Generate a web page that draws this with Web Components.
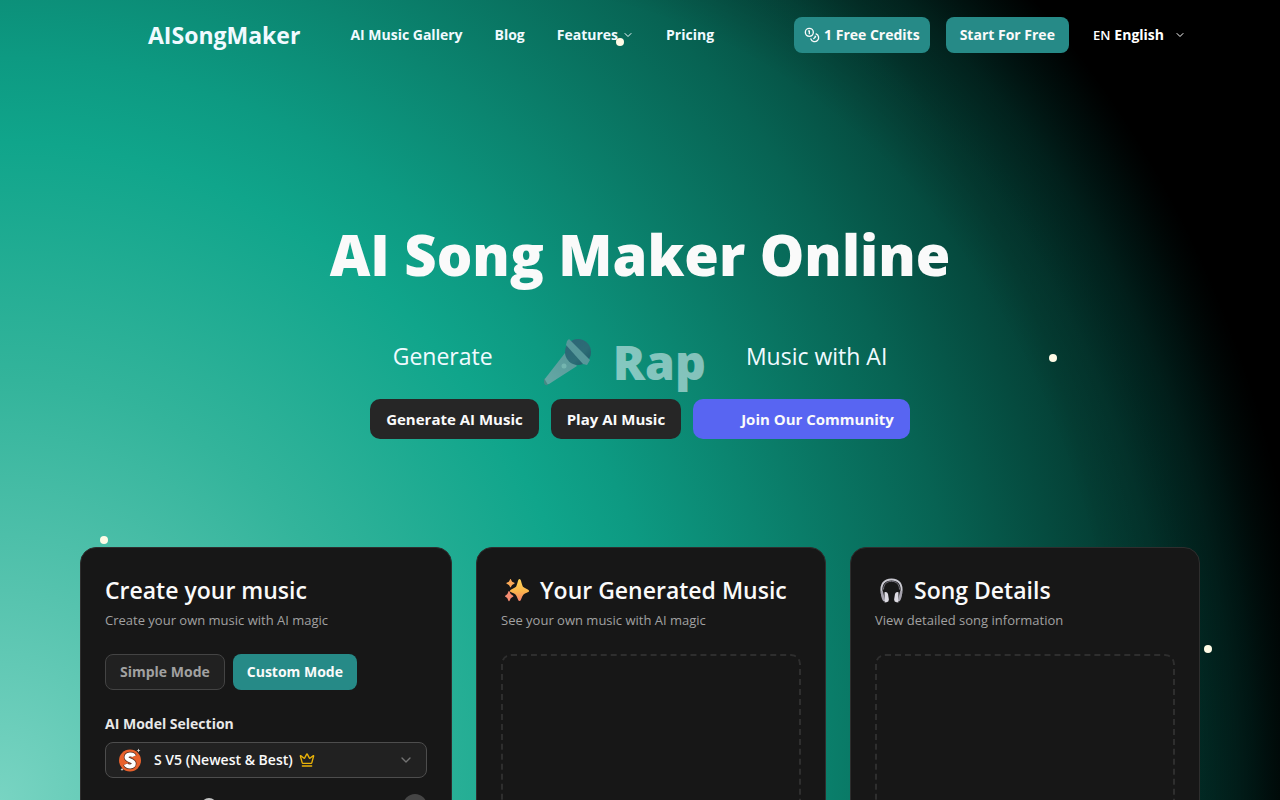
<!DOCTYPE html>
<html lang="en">
<head>
<meta charset="utf-8">
<meta name="viewport" content="width=device-width, initial-scale=1">
<title>AI Song Maker Online</title>
<style>
   html, body {
      margin: 0;
      block-size: 100%;
      overflow: hidden;
      background: #000;
   }
   body {
      font-family: "Open Sans", "Noto Sans", sans-serif;
      font-size: 14px;
      line-height: 20px;
      color: #fafafa;
   }
</style>
</head>
<body>
<song-page>
   <site-header slot="header">
      <a slot="brand" href="#">AISongMaker</a>
      <nav-link href="#gallery">AI Music Gallery</nav-link>
      <nav-link href="#blog">Blog</nav-link>
      <nav-link href="#features" has-menu>Features</nav-link>
      <nav-link href="#pricing">Pricing</nav-link>
      <app-button slot="actions" variant="teal" icon><svg-icon name="coins" size="16"></svg-icon>1 Free Credits</app-button>
      <app-button slot="actions" variant="teal">Start For Free</app-button>
      <language-menu slot="actions" code="EN">English</language-menu>
   </site-header>

   <hero-banner>
      <span slot="title">AI Song Maker Online</span>
      <span slot="before">Generate</span>
      <svg-icon slot="genre" name="mic" size="48"></svg-icon>
      <span slot="genre">Rap</span>
      <span slot="after">Music with AI</span>
      <app-button slot="actions" variant="dark" large>Generate AI Music</app-button>
      <app-button slot="actions" variant="dark" large>Play AI Music</app-button>
      <app-button slot="actions" variant="discord" large>Join Our Community</app-button>
   </hero-banner>

   <card-row>
      <music-card>
         <span slot="title">Create your music</span>
         <span slot="subtitle">Create your own music with AI magic</span>
         <create-form></create-form>
      </music-card>
      <music-card>
         <svg-icon slot="title" name="sparkles" size="32"></svg-icon>
         <span slot="title">Your Generated Music</span>
         <span slot="subtitle">See your own music with AI magic</span>
         <empty-panel></empty-panel>
      </music-card>
      <music-card>
         <svg-icon slot="title" name="headphones" size="32"></svg-icon>
         <span slot="title">Song Details</span>
         <span slot="subtitle">View detailed song information</span>
         <empty-panel></empty-panel>
      </music-card>
   </card-row>
</song-page>

<script>
const ICONS = {
   chevron: `<svg viewBox="0 0 24 24" fill="none" stroke="currentColor" stroke-width="2" stroke-linecap="round" stroke-linejoin="round"><path d="m6 9 6 6 6-6"/></svg>`,
   coins: `<svg viewBox="0 0 24 24" fill="none" stroke="currentColor" stroke-width="2" stroke-linecap="round" stroke-linejoin="round"><circle cx="8" cy="8" r="6"/><path d="M18.09 10.37A6 6 0 1 1 10.34 18"/><path d="M7 6h1v4"/><path d="m16.71 13.88.7.71-2.82 2.82"/></svg>`,
   crown: `<svg viewBox="0 0 24 24" fill="none" stroke="#eab308" stroke-width="2" stroke-linecap="round" stroke-linejoin="round"><path d="M11.562 3.266a.5.5 0 0 1 .876 0L15.39 8.87a1 1 0 0 0 1.516.294L21.183 5.5a.5.5 0 0 1 .798.519l-2.834 10.246a1 1 0 0 1-.956.734H5.81a1 1 0 0 1-.957-.734L2.02 6.02a.5.5 0 0 1 .798-.519l4.276 3.664a1 1 0 0 0 1.516-.294z"/><path d="M5 21h14"/></svg>`,
   mic: `<svg viewBox="0 0 48 48">
      <defs>
         <linearGradient id="mh" x1="0" y1="1" x2="1" y2="0"><stop offset="0" stop-color="#b3b5c5"/><stop offset="1" stop-color="#9c9ab0"/></linearGradient>
         <linearGradient id="mb" x1="0" y1="0" x2="1" y2="1"><stop offset="0" stop-color="#4b3b72"/><stop offset=".6" stop-color="#4a4b70"/><stop offset="1" stop-color="#2c2253"/></linearGradient>
      </defs>
      <path d="M1 42 22 15 34 28 6 46Q2 47 1 42Z" fill="url(#mh)"/>
      <path d="m1 40 4 7Q2 48 1 45Z" fill="#7b7987"/>
      <circle cx="35" cy="14" r="13" fill="url(#mb)"/>
      <path d="m24 3 2-2 21 21-3 5-4-1L23 7Z" fill="#9b9cb5"/>
      <circle cx="21" cy="28" r="2.5" fill="#d0d0da"/>
   </svg>`,
   sparkles: `<svg viewBox="0 0 32 32">
      <defs><linearGradient id="sp" x1="0" y1="0" x2="0" y2="1"><stop offset="0" stop-color="#ffd65a"/><stop offset=".55" stop-color="#fbb64b"/><stop offset="1" stop-color="#f5806b"/></linearGradient></defs>
      <path fill="url(#sp)" d="M18.500 5q1 0 1.400 1.500 1.500 5.800 2.400 6.600 1 1 4.500 2.300 1.300.6 1.300 1.500t-1.300 1.400q-3.500 1.300-4.500 2.400-.9 1.100-2.400 5Q19.500 27 18.500 27t-1.400-1.300q-1.500-3.900-2.400-5-1-1.100-4.500-2.400Q8.900 17.800 8.900 16.900t1.300-1.500q3.500-1.300 4.500-2.300.9-.8 2.400-6.600Q17.500 5 18.500 5Z"/>
      <path fill="#fbaa58" d="M9.500 5q.5 0 .7 1 .6 2 2.600 2.600.8.200.8.700t-.8.700q-2 .6-2.600 2.600-.2.800-.7.800t-.7-.8q-.6-2-2.600-2.600-.8-.2-.8-.7t.8-.7Q8.200 8 8.800 6q.2-1 .7-1Z"/>
      <path fill="#f48c72" d="M8 17q.6 0 .8 1 .6 2.700 2.700 3.300.9.300.9.900t-.9.900q-2.100.7-2.700 3.200-.2 1-.8 1t-.8-1Q6.600 23.800 4.900 23.100q-.9-.3-.9-.9t.9-.9Q6.600 20.700 7.200 18q.2-1 .8-1Z"/>
   </svg>`,
   headphones: `<svg viewBox="0 0 32 32" fill="none">
      <path d="M6.800 19.500C5 10 9.500 5.500 16.500 5.500S28 10 26.200 19.500" stroke="#c9c8d0" stroke-width="2"/>
      <path d="M8.500 15.500C8.500 10.500 11.500 7.300 16.500 7.300s8 3.200 8 8.200" stroke="#77747f" stroke-width="1"/>
      <path d="m6 16.500 2 1 2.200 9.500-2 .3Q5.100 22 6 16.500ZM27 16.500l-2 1L22.800 27l2 .3Q27.900 22 27 16.500Z" fill="#a5a2ad"/>
      <path d="M9.500 18.300q2.700-.8 3.500 1.800l.9 5.500q0 2.400-2.400 2.700l-1.900.1ZM23.500 18.300q-2.700-.8-3.500 1.800l-.9 5.500q0 2.400 2.400 2.700l1.900.1Z" fill="#dddbe3"/>
   </svg>`,
   model: `<svg viewBox="0 0 24 24">
      <circle cx="12" cy="12.500" r="11" fill="#e8612c"/>
      <path d="M16 8.200C15 5.600 8.500 5.700 8.500 9.300c0 3.700 7.300 2.300 7.300 6.300 0 3.800-6.800 3.600-8.100.6" fill="none" stroke="#5a2f20" stroke-width="5.500"/>
      <path d="M16 8.200C15 5.600 8.500 5.700 8.500 9.300c0 3.700 7.300 2.300 7.300 6.300 0 3.800-6.800 3.600-8.100.6" fill="none" stroke="#fff" stroke-width="4"/>
      <path d="m20.500.5.6 1.400 1.400.6-1.400.6-.6 1.400-.6-1.400-1.400-.6 1.400-.6ZM4 20l.5 1 1 .5-1 .5-.5 1-.5-1-1-.5 1-.5Z" fill="#d8d8d8"/>
   </svg>`,
};

// attaches an open shadow root filled from a markup string
class BaseElement extends HTMLElement {
   constructor() {
      super();
      const tmpl = document.createElement("template");
      tmpl.innerHTML = this.constructor.markup;
      this.attachShadow({ mode: "open" }).appendChild(tmpl.content.cloneNode(true));
   }
}

class SvgIcon extends BaseElement {
   static markup = `
      <style>
         :host { display: inline-flex; flex: none; }
         span { display: block; inline-size: 100%; block-size: 100%; }
         svg { display: block; inline-size: 100%; block-size: 100%; }
      </style>
      <span aria-hidden="true"></span>
   `;

   connectedCallback() {
      const size = this.getAttribute("size") ?? "16";
      this.style.inlineSize = `${size}px`;
      this.style.blockSize = `${size}px`;
      this.shadowRoot.querySelector("span").innerHTML = ICONS[this.getAttribute("name")] ?? "";
   }
}

class SongPage extends BaseElement {
   static markup = `
      <style>
         :host {
            display: block;
            position: relative;
            block-size: 100vh;
            overflow: hidden;
            /* the first layer only shades the right-hand side of the glow,
               it has to stay transparent up to 78% or its left edge shows */
            background:
               radial-gradient(ellipse 800px 1038px at 0 800px,
                  transparent 78%, rgba(0,0,0,0.15) 85%, rgba(0,0,0,0.42) 92%, #000 102%)
                  right top / calc(100% - 500px) 100% no-repeat,
               radial-gradient(ellipse 100vw 1400px at 0 800px,
                  #78d4c2 0%, #56c3ae 15%, #33b49b 30%, #10a58b 47%,
                  #0d9a82 53%, #0b8570 62%, #076353 76%, #043f35 88%, #01302a 98%, #000 108%);
         }
         i {
            position: absolute;
            inline-size: 8px;
            block-size: 8px;
            border-radius: 50%;
            background: #fffbe6;
            pointer-events: none;
         }
      </style>
      <slot name="header"></slot>
      <main><slot></slot></main>
      <i style="left: 616px; top: 38px"></i>
      <i style="left: 1049px; top: 354px"></i>
      <i style="left: 100px; top: 536px"></i>
      <i style="left: 1204px; top: 645px"></i>
   `;
}

class SiteHeader extends BaseElement {
   static markup = `
      <style>
         header {
            display: flex;
            align-items: center;
            block-size: 70px;
            padding-inline: 148px 94px;
         }
         ::slotted([slot="brand"]) {
            margin-inline-end: 50px;
            font-size: 23px;
            line-height: 32px;
            font-weight: 700;
            color: #f0faff;
            text-decoration: none;
         }
         nav { display: flex; align-items: center; gap: 32px; }
         .actions { display: flex; align-items: center; gap: 16px; margin-inline-start: auto; }
      </style>
      <header>
         <slot name="brand"></slot>
         <nav><slot></slot></nav>
         <div class="actions"><slot name="actions"></slot></div>
      </header>
   `;
}

class NavLink extends BaseElement {
   static markup = `
      <style>
         a {
            display: flex;
            align-items: center;
            gap: 4px;
            font-weight: 700;
            color: #f0faff;
            text-decoration: none;
         }
         svg-icon { display: none; }
         :host([has-menu]) svg-icon { display: inline-flex; }
      </style>
      <a><slot></slot><svg-icon name="chevron" size="12"></svg-icon></a>
   `;

   connectedCallback() {
      this.shadowRoot.querySelector("a").href = this.getAttribute("href");
   }
}

class AppButton extends BaseElement {
   static markup = `
      <style>
         :host { display: inline-flex; }
         button {
            display: flex;
            align-items: center;
            gap: 4px;
            block-size: 36px;
            padding: 0 14px;
            border: 0;
            border-radius: 8px;
            font: inherit;
            font-weight: 700;
            white-space: nowrap;
            color: #fafafa;
            background: #262626;
            cursor: pointer;
         }
         :host([icon]) button { padding-inline: 10px; }
         :host([variant="teal"]) button { background: #268a87; }
         :host([variant="outline"]) button {
            border: 1px solid #444;
            background: #212121;
            color: #a1a1a1;
         }
         :host([large]) button {
            block-size: 40px;
            padding-inline: 16px;
            border-radius: 10px;
            font-size: 15px;
         }
         :host([variant="discord"]) button { padding-inline-start: 48px; background: #5865f2; }
      </style>
      <button type="button"><slot></slot></button>
   `;
}

class LanguageMenu extends BaseElement {
   static markup = `
      <style>
         button {
            display: flex;
            align-items: center;
            block-size: 36px;
            padding: 0 0 0 8px;
            border: 0;
            background: transparent;
            font: inherit;
            font-weight: 700;
            color: #fff;
         }
         .code { font-weight: 600; font-size: 13px; margin-inline-end: 4px; }
         svg-icon { margin-inline-start: 10px; }
      </style>
      <button type="button" aria-haspopup="listbox">
         <span class="code"></span><slot></slot><svg-icon name="chevron" size="12"></svg-icon>
      </button>
   `;

   connectedCallback() {
      this.shadowRoot.querySelector(".code").textContent = this.getAttribute("code");
   }
}

class HeroBanner extends BaseElement {
   static markup = `
      <style>
         :host { display: block; }
         section {
            display: flex;
            flex-direction: column;
            align-items: center;
            padding-block: 154px 108px;
         }
         h1 {
            margin: 0 0 52px;
            font-size: 56px;
            line-height: 60px;
            font-weight: 800;
            white-space: nowrap;
         }
         .line {
            display: flex;
            margin-block-end: 11px;
            font-size: 23px;
            line-height: 40px;
            color: #f0faff;
         }
         .genre {
            display: flex;
            align-items: center;
            gap: 22px;
            margin-inline: 50px 40px;
            font-size: 48px;
            line-height: 52px;
            font-weight: 800;
            opacity: 0.53;
         }
         .actions { display: flex; gap: 12px; }
      </style>
      <section>
         <h1><slot name="title"></slot></h1>
         <div class="line">
            <slot name="before"></slot>
            <div class="genre"><slot name="genre"></slot></div>
            <slot name="after"></slot>
         </div>
         <div class="actions"><slot name="actions"></slot></div>
      </section>
   `;
}

class CardRow extends BaseElement {
   static markup = `
      <style>
         :host {
            display: grid;
            grid-template-columns: 372fr 350fr 350fr;
            gap: 24px;
            padding-inline: 80px;
         }
      </style>
      <slot></slot>
   `;
}

class MusicCard extends BaseElement {
   static markup = `
      <style>
         :host {
            display: block;
            box-sizing: border-box;
            min-inline-size: 0;
            padding: 24px;
            border: 1px solid #2e2e2e;
            border-radius: 16px;
            background: #171717;
         }
         h2 {
            display: flex;
            align-items: center;
            gap: 7px;
            margin: 2px 0 4px;
            font-size: 23px;
            line-height: 32px;
            font-weight: 600;
            white-space: nowrap;
         }
         p { margin: 0 0 24px; font-size: 13px; color: #a1a1a1; }
      </style>
      <h2><slot name="title"></slot></h2>
      <p><slot name="subtitle"></slot></p>
      <slot></slot>
   `;
}

class EmptyPanel extends BaseElement {
   static markup = `
      <style>
         :host {
            display: block;
            box-sizing: border-box;
            block-size: 400px;
            border: 2px dashed #2e2e2e;
            border-radius: 10px;
         }
      </style>
   `;
}

class CreateForm extends BaseElement {
   static markup = `
      <style>
         :host { display: block; }
         .modes { display: flex; gap: 8px; margin-block-end: 24px; }
         label { display: block; margin-block-end: 8px; font-weight: 700; color: #e8e8e8; }
         .field { position: relative; }
         select {
            appearance: none;
            box-sizing: border-box;
            inline-size: 100%;
            block-size: 36px;
            padding: 0 40px 0 48px;
            border: 1px solid #4d4d4d;
            border-radius: 8px;
            background: #212121;
            font: inherit;
            font-weight: 600;
            color: #fafafa;
         }
         .logo, .crown, .arrow { position: absolute; pointer-events: none; }
         .logo { inset: 6px auto auto 13px; }
         .crown { inset: 10px auto auto 194px; }
         .arrow { inset: 10px 13px auto auto; color: #737373; }
         .options {
            display: flex;
            justify-content: space-between;
            padding-inline: 96px 0;
            margin-block-start: 16px;
         }
         .options input {
            appearance: none;
            inline-size: 16px;
            block-size: 16px;
            margin: 4px 0 0;
            border-radius: 50%;
            background: #c4c4c4;
         }
         .options button {
            inline-size: 24px;
            block-size: 24px;
            padding: 0;
            border: 0;
            border-radius: 50%;
            background: #454545;
         }
      </style>
      <div class="modes">
         <app-button variant="outline">Simple Mode</app-button>
         <app-button variant="teal">Custom Mode</app-button>
      </div>
      <label for="model">AI Model Selection</label>
      <div class="field">
         <select id="model"><option>S V5 (Newest &amp; Best)</option></select>
         <svg-icon class="logo" name="model" size="24"></svg-icon>
         <svg-icon class="crown" name="crown" size="16"></svg-icon>
         <svg-icon class="arrow" name="chevron" size="16"></svg-icon>
      </div>
      <div class="options">
         <input type="checkbox" aria-label="Instrumental">
         <button type="button" aria-label="Help"></button>
      </div>
   `;
}

customElements.define("svg-icon", SvgIcon);
customElements.define("app-button", AppButton);
customElements.define("nav-link", NavLink);
customElements.define("language-menu", LanguageMenu);
customElements.define("site-header", SiteHeader);
customElements.define("hero-banner", HeroBanner);
customElements.define("empty-panel", EmptyPanel);
customElements.define("create-form", CreateForm);
customElements.define("music-card", MusicCard);
customElements.define("card-row", CardRow);
customElements.define("song-page", SongPage);
</script>
</body>
</html>
